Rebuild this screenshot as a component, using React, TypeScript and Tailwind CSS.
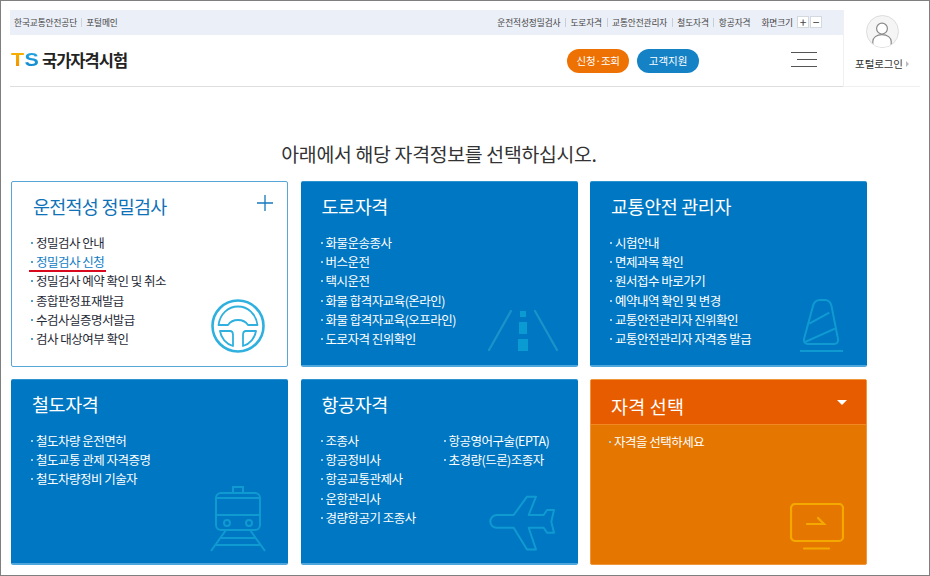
import type { ReactNode } from "react"

const font = { fontFamily: '"Noto Sans CJK KR", "Noto Sans", sans-serif' }

const topLinks = ["운전적성정밀검사", "도로자격", "교통안전관리자", "철도자격", "항공자격"]

const SteeringIcon = () => (
  <svg viewBox="0 0 56 56" className="w-[56px] h-[56px]" fill="none" stroke="#2fb0de" strokeWidth="1.8" strokeLinejoin="round">
    <circle cx="28" cy="28" r="25.5" strokeWidth="2.6" />
    <path d="M8.500 27C10 16 18 8.500 28 8.500S46 16 47.500 27H38C36 24 33 22 28 22S20 24 18 27Z" />
    <path d="M10 33H20C22 33 23 35 23 37V48C16 46 11 40 10 33Z" />
    <path d="M46 33H36C34 33 33 35 33 37V48C40 46 45 40 46 33Z" />
  </svg>
)

const RoadIcon = () => (
  <svg viewBox="0 0 70 42" className="w-[70px] h-[42px]" fill="none">
    <path d="M1 40 L23 1" stroke="#1a93cb" strokeWidth="2.2" strokeLinecap="round" />
    <path d="M69 40 L47 1" stroke="#1a93cb" strokeWidth="2.2" strokeLinecap="round" />
    <rect x="32" y="1" width="6" height="6" fill="#0a9bd3" />
    <rect x="31" y="12" width="8" height="12" fill="#0a9bd3" />
    <rect x="30" y="29" width="10" height="12" fill="#0a9bd3" />
  </svg>
)

const ConeIcon = () => (
  <svg viewBox="0 0 44 54" className="w-[44px] h-[54px]" fill="none" stroke="#0f9bd2" strokeWidth="2">
    <path d="M13 7C14 3 17 1 20 1H25C28 1 30.500 3 31.500 7L38 40C38.500 43 37 45 34 45H8C5 45 3.500 43 4 40Z" />
    <path d="M9.300 24.700L29.300 13.700" />
    <path d="M5 43L35 29.700" />
    <path d="M0 52H43" />
  </svg>
)

const TrainIcon = () => (
  <svg viewBox="0 0 56 66" className="w-[56px] h-[66px]" fill="none" stroke="#0f9bd2" strokeWidth="2">
    <path d="M23 7V1H33V7" />
    <rect x="6" y="7" width="44" height="37" rx="5" />
    <path d="M6 12H50M6 29H50" />
    <circle cx="17" cy="37" r="3" />
    <circle cx="39" cy="37" r="3" />
    <path d="M16 44L1 65M40 44L55 65M11 52H45M6 59H50" />
  </svg>
)

const PlaneIcon = () => (
  <svg viewBox="0 0 67 56" className="w-[67px] h-[56px]" fill="none" stroke="#0f9bd2" strokeWidth="2" strokeLinejoin="round">
    <path d="M8 20H24.700L38 1.700H47L39.700 20H54.700L58 15H65L62.300 26.700L65 37.700H58L54.700 32.700H39.700L47 54.500H38L24.700 32.700H8C4 32.700 1.300 30 1.300 26.500S4 20 8 20Z" />
  </svg>
)

const MonitorIcon = () => (
  <svg viewBox="0 0 54 48" className="w-[54px] h-[48px]" fill="none" stroke="#f4a800" strokeWidth="2.2" strokeLinecap="round">
    <rect x="1" y="1" width="52" height="37" rx="4" />
    <path d="M17 21H34L28 15" />
    <path d="M14 45.500H39" />
  </svg>
)

const Bullets = ({ items, active, light = true }: { items: string[]; active?: string; light?: boolean }) => (
  <ul className="flex flex-col">
    {items.map((t) => (
      <li
        key={t}
        className={`relative h-[19.2px] leading-[19px] pl-[5px] text-[12.5px] tracking-[-0.52px] whitespace-nowrap ${
          light ? "text-white" : t === active ? "text-[#0f7dc4]" : "text-[#1f2a36]"
        }`}
      >
        <span className={`absolute left-0 top-[9px] w-[2px] h-[2px] ${light ? "bg-[#9fd0ea]" : "bg-[#4f9fcf]"}`} />
        {t}
        {t === active && <span className="absolute left-[-2px] top-[18px] w-[77px] h-[2px] bg-[#d8091c]" />}
      </li>
    ))}
  </ul>
)

const Card = ({ title, icon, children }: { title: string; icon: ReactNode; children: ReactNode }) => (
  <div className="relative w-[277px] h-[186px] bg-[#0077c2] border-t border-[#2f93d0] border-b-2 border-b-[#4ea6dc] rounded-[2px] px-[20px] pt-[10px]">
    <h2 className="text-[18.5px] leading-[28px] h-[28px] text-white tracking-[-0.4px] mb-[13px] pl-[1px]">{title}</h2>
    {children}
    {icon}
  </div>
)

export default function App() {
  return (
    <div style={font} className="w-[930px] h-[576px] overflow-hidden bg-white border border-[#7f7f7f] pl-[9px] pt-[9px]">
      <div className="flex w-[910px]">
        <div className="w-[833px]">
          <div className="h-[25px] bg-[#ebeff7] flex items-center justify-between pl-[4px] pr-[21px] text-[8.7px] text-[#444] tracking-[-0.1px]">
            <div className="flex items-center">
              <span>한국교통안전공단</span>
              <span className="mx-[4px] w-px h-[9px] bg-[#d0d4da]" />
              <span>포털메인</span>
            </div>
            <div className="flex items-center">
              {topLinks.map((t, i) => (
                <span key={t} className="flex items-center">
                  {i > 0 && <span className="mx-[4.5px] w-px h-[9px] bg-[#c9ced6]" />}
                  {t}
                </span>
              ))}
              <span className="ml-[11px]">화면크기</span>
              <div className="ml-[4px] flex h-[12px] gap-px">
                <span className="w-[12px] bg-white border border-[#d4d8df] flex items-center justify-center text-[12px] leading-none">+</span>
                <span className="w-[12px] bg-white border border-[#d4d8df] flex items-center justify-center text-[12px] leading-none">−</span>
              </div>
            </div>
          </div>
          <div className="h-[52px] border-b border-[#dedede] flex items-center pl-[1px]">
            <span className="w-[29px] flex">
              <span className="inline-block origin-left scale-x-[1.16] font-['Liberation_Sans'] font-bold text-[18.5px] leading-none tracking-[0.3px]">
                <span className="bg-gradient-to-b from-[#f8b800] to-[#f08c00] bg-clip-text text-transparent">T</span>
                <span className="bg-gradient-to-b from-[#28aae2] to-[#0a84cc] bg-clip-text text-transparent">S</span>
              </span>
            </span>
            <span className="text-[16.5px] font-bold text-[#222] tracking-[-1px] ml-[2px]">국가자격시험</span>
            <div className="ml-[440px] flex gap-[8px]">
              <span className="w-[62px] h-[24px] rounded-full bg-[#ee7203] text-white text-[10.5px] tracking-[-0.3px] flex items-center justify-center">신청·조회</span>
              <span className="w-[62px] h-[24px] rounded-full bg-[#1582c6] text-white text-[10.5px] flex items-center justify-center">고객지원</span>
            </div>
            <div className="ml-[92px] w-[26px] flex flex-col gap-[6px] items-end pb-[2px]">
              <span className="w-[26px] h-px bg-[#555]" />
              <span className="w-[20px] h-px bg-[#555]" />
              <span className="w-[26px] h-px bg-[#555]" />
            </div>
          </div>
        </div>
        <div className="w-[77px] h-[77px] border-l border-b border-[#f0f0f0] flex flex-col items-center pt-[5px]">
          <div className="w-[33px] h-[33px] rounded-full bg-[#f5f5f5] border border-[#dddddd] overflow-hidden flex items-center justify-center">
            <svg viewBox="0 0 24 24" className="w-[26px] h-[26px] mt-[4px]" fill="#fff" stroke="#8a8a8a" strokeWidth="1.1">
              <circle cx="12" cy="7" r="5" />
              <path d="M3.500 24V19C3.500 15.500 7 12.500 12 12.500S20.500 15.500 20.500 19V24" />
            </svg>
          </div>
          <div className="mt-[8px] flex items-center text-[10.5px] text-[#333] tracking-[-0.1px] whitespace-nowrap">
            포털로그인
            <span className="ml-[3px] w-0 h-0 border-y-[3px] border-y-transparent border-l-[3px] border-l-[#bbb]" />
          </div>
        </div>
      </div>

      <h1 className="w-[858px] mt-[53px] h-[28px] leading-[28px] text-center text-[19.4px] text-[#333] tracking-[-0.3px]">
        아래에서 해당 자격정보를 선택하십시오.
      </h1>

      <div className="mt-[13px] ml-[1px] grid grid-cols-[277px_277px_277px] gap-x-[12.5px] gap-y-[12px]">
        <div className="relative w-[277px] h-[186px] bg-white border border-[#58a6d8] rounded-[2px] px-[19px] pt-[10px]">
          <h2 className="text-[18.5px] leading-[28px] h-[28px] text-[#0f72b8] tracking-[-0.75px] mb-[13px] pl-[2px]">운전적성 정밀검사</h2>
          <Bullets
            light={false}
            active="정밀검사 신청"
            items={["정밀검사 안내", "정밀검사 신청", "정밀검사 예약 확인 및 취소", "종합판정표재발급", "수검사실증명서발급", "검사 대상여부 확인"]}
          />
          <svg viewBox="0 0 16 16" className="absolute right-[14px] top-[13px] w-[16px] h-[16px]" stroke="#1478bd" strokeWidth="1.3">
            <path d="M8 0V16M0 8H16" />
          </svg>
          <div className="absolute left-[198px] top-[116px]">
            <SteeringIcon />
          </div>
        </div>

        <Card title="도로자격" icon={<div className="absolute left-[187px] top-[128px]"><RoadIcon /></div>}>
          <Bullets items={["화물운송종사", "버스운전", "택시운전", "화물 합격자교육(온라인)", "화물 합격자교육(오프라인)", "도로자격 진위확인"]} />
        </Card>

        <Card title="교통안전 관리자" icon={<div className="absolute left-[210px] top-[117px]"><ConeIcon /></div>}>
          <Bullets items={["시험안내", "면제과목 확인", "원서접수 바로가기", "예약내역 확인 및 변경", "교통안전관리자 진위확인", "교통안전관리자 자격증 발급"]} />
        </Card>

        <Card title="철도자격" icon={<div className="absolute left-[199px] top-[106px]"><TrainIcon /></div>}>
          <Bullets items={["철도차량 운전면허", "철도교통 관제 자격증명", "철도차량정비 기술자"]} />
        </Card>

        <Card title="항공자격" icon={<div className="absolute left-[188px] top-[115px]"><PlaneIcon /></div>}>
          <div className="flex">
            <div className="w-[123px]">
              <Bullets items={["조종사", "항공정비사", "항공교통관제사", "운항관리사", "경량항공기 조종사"]} />
            </div>
            <Bullets items={["항공영어구술(EPTA)", "초경량(드론)조종자"]} />
          </div>
        </Card>

        <div className="relative w-[277px] h-[186px] bg-[#e57700] border border-[#f0963a] rounded-[2px]">
          <div className="h-[45px] bg-[#e85c00] border-b border-[#f08a20] pl-[20px] pt-[12px] text-[18.5px] leading-[28px] text-white tracking-[0.2px]">자격 선택</div>
          <span className="absolute left-[246px] top-[20px] w-0 h-0 border-x-[5px] border-x-transparent border-t-[5px] border-t-white" />
          <div className="pl-[18px] pt-[7px]">
            <Bullets items={["자격을 선택하세요"]} />
          </div>
          <div className="absolute left-[199px] top-[123px]">
            <MonitorIcon />
          </div>
        </div>
      </div>
    </div>
  )
}
